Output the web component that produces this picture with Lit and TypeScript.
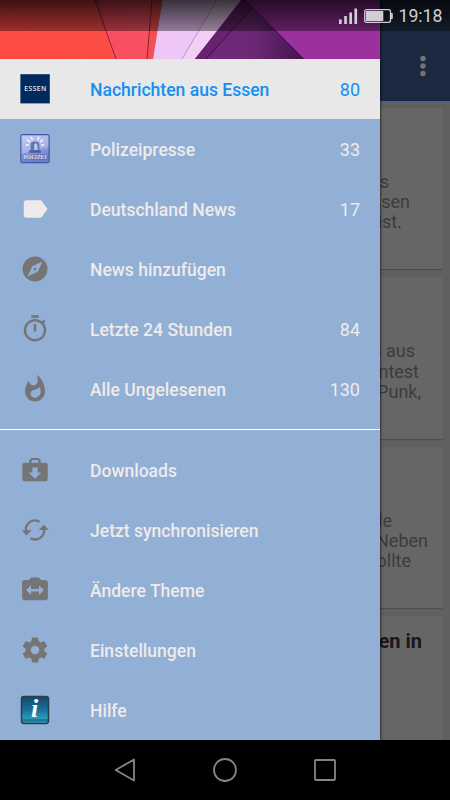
import { LitElement, html, svg, css } from "lit";
import { customElement, property } from "lit/decorators.js";
import { classMap } from "lit/directives/class-map.js";
import { styleMap } from "lit/directives/style-map.js";

const glyph = (d: string) => svg`<path fill-rule="evenodd" d=${d}></path>`;

const icons: Record<string, unknown> = {
  label: glyph("M17.63 5.84C17.27 5.33 16.67 5 16 5L5 5.01C3.9 5.01 3 5.9 3 7v10c0 1.1.9 1.99 2 1.99L16 19c.67 0 1.27-.33 1.63-.84L22 12l-4.37-6.16z"),
  explore: glyph("M12 10.9c-.61 0-1.1.49-1.1 1.1s.49 1.1 1.1 1.1c.61 0 1.1-.49 1.1-1.1s-.49-1.1-1.1-1.1zM12 2C6.48 2 2 6.48 2 12s4.48 10 10 10 10-4.48 10-10S17.52 2 12 2zm2.19 12.19L6 18l3.81-8.19L18 6l-3.81 8.19z"),
  timer: glyph("M15 1H9v2h6V1zm-4 13h2V8h-2v6zm8.03-6.61l1.42-1.42c-.43-.51-.9-.99-1.41-1.41l-1.42 1.42C16.07 4.74 14.12 4 12 4c-4.97 0-9 4.03-9 9s4.02 9 9 9 9-4.03 9-9c0-2.12-.74-4.07-1.97-5.61zM12 20c-3.87 0-7-3.13-7-7s3.13-7 7-7 7 3.13 7 7-3.13 7-7 7z"),
  fire: glyph("M13.5.67s.74 2.65.74 4.8c0 2.06-1.35 3.73-3.41 3.73-2.07 0-3.63-1.67-3.63-3.73l.03-.36C5.21 7.51 4 10.62 4 14c0 4.42 3.58 8 8 8s8-3.58 8-8C20 8.61 17.41 3.8 13.5.67zM11.71 19c-1.78 0-3.22-1.4-3.22-3.14 0-1.62 1.05-2.76 2.81-3.12 1.77-.36 3.6-1.21 4.62-2.58.39 1.29.59 2.65.59 4.04 0 2.65-2.15 4.8-4.8 4.8z"),
  bag: glyph("M7.4 6.2V4.2L9.2 2.4H14.8L16.6 4.2V6.2H20.4Q22.2 6.2 22.2 8V19.1Q22.2 20.9 20.4 20.9H3.6Q1.8 20.900 1.8 19.1V8Q1.8 6.2 3.600 6.2ZM9.100 6.2H14.9V4.900L14.2 4H9.8L9.100 4.900ZM9.9 10V14H7L12 19L17 14H14.1V10Z"),
  sync: svg`
    <path class="arc" d="M4.9 12.9A7.1 7.1 0 0 1 15.6 5.5M19.1 11.2A7.1 7.1 0 0 1 8.4 18.5"></path>
    <path d="M1.300 12.200H9.300L5.200 16.400ZM15 11.900H23.1L19.1 7.7Z"></path>`,
  swap: glyph("M20 4h-3.2L15 2H9L7.2 4H3.8c-1.2 0-2.1.8-2.1 2v12.2c0 1.2.9 2 2.1 2h16.4c1.2 0 2.1-.8 2.1-2V6c0-1.2-1-2-2.3-2zM15.2 16v-2.9H8.8V16L4.9 12l3.9-3.8v2.9h6.4V8.2L19.1 12z"),
  gear: glyph("M19.43 12.98c.04-.32.07-.64.07-.98s-.03-.66-.07-.98l2.11-1.65c.19-.15.24-.42.12-.64l-2-3.46c-.12-.22-.39-.3-.61-.22l-2.49 1c-.52-.4-1.08-.73-1.69-.98l-.38-2.65C14.46 2.18 14.25 2 14 2h-4c-.25 0-.46.18-.49.42l-.38 2.65c-.61.25-1.17.59-1.69.98l-2.49-1c-.23-.09-.49 0-.61.22l-2 3.46c-.13.22-.07.49.12.64l2.11 1.65c-.04.32-.07.65-.07.98s.03.66.07.98l-2.11 1.65c-.19.15-.24.42-.12.64l2 3.46c.12.22.39.3.61.22l2.49-1c.52.4 1.08.73 1.69.98l.38 2.65c.03.24.24.42.49.42h4c.25 0 .46-.18.49-.42l.38-2.65c.61-.25 1.17-.59 1.69-.98l2.49 1c.23.09.49 0 .61-.22l2-3.46c.12-.22.07-.49-.12-.64l-2.11-1.65zM12 15.5c-1.93 0-3.5-1.57-3.5-3.5s1.57-3.5 3.5-3.5 3.5 1.57 3.5 3.5-1.57 3.5-3.5 3.5z"),
};

const badges: Record<string, unknown> = {
  essen: svg`
    <rect x=".4" y=".2" width="29.4" height="29.2" fill="#002a5c"></rect>
    <text x="15.3" y="17.4" textLength="22" lengthAdjust="spacing" text-anchor="middle" font-family="Open Sans, Noto Sans, sans-serif" font-weight="600" font-size="6.800" fill="#e4eaf4">ESSEN</text>`,
  police: svg`
    <defs><linearGradient id="pol" x1="0" y1="0" x2=".3" y2="1">
      <stop offset="0" stop-color="#b4c0ec"></stop><stop offset=".55" stop-color="#93a3e0"></stop><stop offset="1" stop-color="#6c7ecb"></stop>
    </linearGradient></defs>
    <rect x=".9" y=".7" width="28.2" height="28" rx="1.6" fill="url(#pol)" stroke="#4656a6" stroke-width="1.2"></rect>
    <path d="M1.6 1.4H28.4V14Q15 15 1.6 20Z" fill="#fff" opacity=".2"></path>
    <path d="M8.8 11.2L5.8 10.8M10 8L7 5.6M12.4 6L11 2.8M17.6 6L19 2.8M20 8L23 5.6M21.2 11.2L24.2 10.8" stroke="#eef3ff" stroke-width="1.7"></path>
    <path d="M10.7 16.5V10.8Q10.7 7.5 15 7.5T19.3 10.8V16.5Z" fill="#6073b2"></path>
    <path d="M14.2 16V10.2Q15 9 16.5 9.5L17.5 11V16Z" fill="#b9c8ef"></path>
    <rect x="9.2" y="16.3" width="11.6" height="2.5" fill="#4b5e9b"></rect>
    <text x="15" y="25" textLength="22.5" lengthAdjust="spacingAndGlyphs" text-anchor="middle" font-family="Liberation Serif, serif" font-weight="700" font-size="6.8" fill="#e3e8fa" stroke="#56669f" stroke-width=".8" paint-order="stroke">POLIZEI</text>`,
  info: svg`
    <defs><linearGradient id="inf" x1="0" y1="0" x2="0" y2="1">
      <stop offset="0" stop-color="#17466d"></stop><stop offset=".45" stop-color="#186b94"></stop>
      <stop offset=".85" stop-color="#2a9fbf"></stop><stop offset=".86" stop-color="#116482"></stop><stop offset="1" stop-color="#35b0cb"></stop>
    </linearGradient></defs>
    <rect x="1.5" y="1.4" width="27" height="27" rx="2.4" fill="url(#inf)" stroke="#273d52" stroke-width="1.5"></rect>
    <text x="14.6" y="22.3" text-anchor="middle" font-family="Liberation Serif, serif" font-style="italic" font-weight="700" font-size="26" fill="#fff">i</text>`,
};

interface Entry { icon: string; text: string; count?: number; active?: boolean; light?: boolean }

const feeds: Entry[] = [
  { icon: "essen", text: "Nachrichten aus Essen", count: 80, active: true },
  { icon: "police", text: "Polizeipresse", count: 33 },
  { icon: "label", text: "Deutschland News", count: 17, light: true },
  { icon: "explore", text: "News hinzufügen" },
  { icon: "timer", text: "Letzte 24 Stunden", count: 84 },
  { icon: "fire", text: "Alle Ungelesenen", count: 130 },
];

const actions: Entry[] = [
  { icon: "bag", text: "Downloads" },
  { icon: "sync", text: "Jetzt synchronisieren" },
  { icon: "swap", text: "Ändere Theme" },
  { icon: "gear", text: "Einstellungen" },
  { icon: "info", text: "Hilfe" },
];

// Each line is right-aligned; inset is the free room to the card's right edge.
const cards = [
  { lines: [{ t: "s", inset: 54 }, { t: "ssen", inset: 33 }, { t: "ist.", inset: 41 }] },
  { lines: [{ t: "s aus", inset: 28 }, { t: "ntest", inset: 24 }, { t: "Punk,", inset: 22 }] },
  { lines: [{ t: "le", inset: 51 }, { t: "Neben", inset: 15 }, { t: "ollte", inset: 32 }] },
  { title: true, lines: [{ t: "en in", inset: 21 }] },
];

@customElement("drawer-row")
export class DrawerRow extends LitElement {
  @property({ attribute: false }) entry!: Entry;

  static styles = css`
    :host { display: block; }
    .row { display: flex; align-items: center; height: 60px; padding: 0 20px; box-sizing: border-box; color: #eeebea; }
    .active { background: #e8e8e8; color: #158ff2; }
    svg { width: 30px; height: 30px; margin-right: 40px; flex: none; fill: #757575; overflow: visible; }
    .light { fill: #eeebea; }
    .arc { fill: none; stroke: #757575; stroke-width: 1.9; }
    .text { flex: 1; padding-top: 2px; font-weight: 500; font-size: 17.55px; line-height: 24px; white-space: nowrap; }
    .count { padding-top: 2px; font-size: 18px; line-height: 24px; }
  `;

  render() {
    const e = this.entry;
    const badge = badges[e.icon];
    return html`<div class=${classMap({ row: true, active: !!e.active })}>
      <svg class=${classMap({ light: !!e.light })} viewBox=${badge ? "0 0 30 30" : "0 0 24 24"}>${badge ?? icons[e.icon]}</svg>
      <span class="text">${e.text}</span>
      ${e.count ? html`<span class="count">${e.count}</span>` : ""}
    </div>`;
  }
}

@customElement("app-root")
export class AppRoot extends LitElement {
  static styles = css`
    :host { display: block; font-family: Roboto, "Noto Sans", sans-serif; }
    .screen { position: relative; display: flex; flex-direction: column; width: 450px; height: 800px; overflow: hidden; background: #000; }
    .appbar { flex: none; box-sizing: border-box; height: 101px; padding: 55px 24.5px 0 0; display: flex; justify-content: flex-end; background: #1b2a40; border-bottom: 1px solid #0b2751; }
    .dots { width: 6px; height: 22px; fill: #757575; }
    .feed { flex: 1; min-height: 0; overflow: hidden; display: flex; flex-direction: column; gap: 8px; padding: 7px 7px 0; background: #606060; }
    .card { flex: none; box-sizing: border-box; height: 161.4px; padding-top: 64px; border-radius: 2px; background: #666; box-shadow: 0 1px 1px #4c4c4c; }
    .title { padding-top: 12px; }
    .line { height: 20.2px; line-height: 20.2px; font-size: 18px; color: #3c3c3c; text-align: right; white-space: nowrap; }
    .title .line { height: 26px; line-height: 26px; font-size: 20px; font-weight: 700; color: #181818; }
    .nav { flex: none; display: flex; height: 60px; align-items: center; justify-content: center; gap: 70px; background: #000; }
    .nav svg { width: 30px; height: 30px; fill: none; stroke: #858585; stroke-width: 1.8; stroke-linejoin: round; }
    .drawer { position: absolute; left: 0; top: 0; width: 380px; height: 740px; background: #92afd5; box-shadow: 0 0 3px #000; }
    .art { display: block; width: 380px; height: 59px; }
    .divider { height: 1px; margin: 10px 0; background: #fff; }
    .status { position: absolute; left: 0; top: 0; width: 450px; height: 31px; box-sizing: border-box; display: flex; align-items: center; justify-content: flex-end; padding: 1px 7.5px 0 0;
      background: linear-gradient(rgba(0, 0, 0, .76), rgba(0, 0, 0, .38)); color: #d2cdd4; font-size: 17.7px; }
    .signal { width: 56px; height: 18px; margin-right: 4.5px; }
  `;

  render() {
    return html`<div class="screen">
      <div class="appbar">
        <svg class="dots" viewBox="0 0 6 22"><circle cx="3" cy="3.5" r="2.7"></circle><circle cx="3" cy="11" r="2.7"></circle><circle cx="3" cy="18.5" r="2.7"></circle></svg>
      </div>
      <div class="feed">
        ${cards.map(c => html`<div class=${classMap({ card: true, title: !!c.title })}>
          ${c.lines.map(l => html`<div class="line" style=${styleMap({ paddingRight: l.inset + "px" })}>${l.t}</div>`)}
        </div>`)}
      </div>
      <div class="nav">
        <svg viewBox="0 0 30 30"><path d="M5.7 15L24 4.500V25.500Z"></path></svg>
        <svg viewBox="0 0 30 30"><circle cx="15" cy="15" r="11"></circle></svg>
        <svg viewBox="0 0 30 30"><rect x="5" y="5" width="20" height="20" rx="1"></rect></svg>
      </div>
      <div class="drawer">
        <svg class="art" viewBox="0 0 380 59" preserveAspectRatio="none">
          <defs>
            <linearGradient id="red" x1="0" y1="0" x2="1" y2="0"><stop offset="0" stop-color="#ff4a44"></stop><stop offset="1" stop-color="#fb4d45"></stop></linearGradient>
            <linearGradient id="pink" x1="0" y1="0" x2="1" y2="0"><stop offset="0" stop-color="#ca3f52"></stop><stop offset=".2" stop-color="#f94d60"></stop><stop offset="1" stop-color="#f75261"></stop></linearGradient>
            <linearGradient id="dark" x1="0" y1="0" x2="1" y2="0"><stop offset="0" stop-color="#702a7c"></stop><stop offset=".55" stop-color="#6b2873"></stop><stop offset="1" stop-color="#43134d"></stop></linearGradient>
          </defs>
          <rect width="380" height="59" fill="#9b319f"></rect>
          <path d="M0 0H97L117 59H0Z" fill="url(#red)"></path>
          <path d="M95 0H152L147 59H116Z" fill="url(#pink)"></path>
          <path d="M152 0H162.500L153 59H147Z" fill="#f64f50"></path>
          <path d="M95 0L116 59M152 0L147 59" stroke="#8f2438" fill="none"></path>
          <path d="M162.500 0H218L182 59H153Z" fill="#eec6f8"></path>
          <path d="M217 0H243L195 59H182Z" fill="#f2d0f5"></path>
          <path d="M217 0L182 59" stroke="#b99abf" fill="none"></path>
          <path d="M241 0H245L304 59H195Z" fill="url(#dark)"></path>
          <path d="M242 0H245L252 8L206 59H195Z" fill="#672270"></path>
          <path d="M252 8L206 59" stroke="#3e0c48" fill="none"></path>
          <path d="M245 0L304 59" stroke="#4b1253" fill="none"></path>
        </svg>
        ${feeds.map(e => html`<drawer-row .entry=${e}></drawer-row>`)}
        <div class="divider"></div>
        ${actions.map(e => html`<drawer-row .entry=${e}></drawer-row>`)}
      </div>
      <div class="status">
        <svg class="signal" viewBox="0 0 56 18">
          <g fill="#d2cdd4"><rect x="1" y="12.500" width="2.700" height="4.500"></rect><rect x="6.200" y="9" width="2.700" height="8"></rect><rect x="11.300" y="5.500" width="2.700" height="11.500"></rect><rect x="16.400" y="1.500" width="2.700" height="15.500"></rect></g>
          <rect x="26.700" y="2.700" width="25.800" height="12.600" rx="2" fill="none" stroke="#d2cdd4" stroke-width="1.300"></rect>
          <rect x="28" y="4" width="17.300" height="10" fill="#d2cdd4"></rect>
          <rect x="52.800" y="6" width="2" height="6" rx=".8" fill="#d2cdd4"></rect>
        </svg>
        <span>19:18</span>
      </div>
    </div>`;
  }
}
